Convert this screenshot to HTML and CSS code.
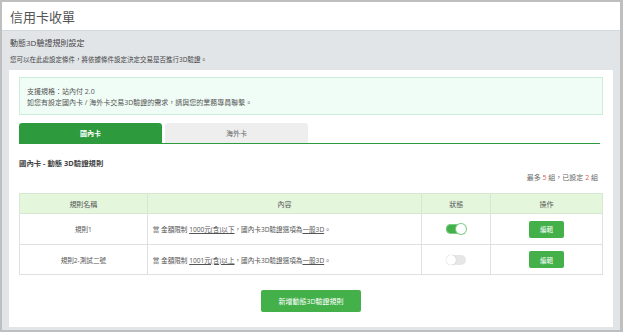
FILE: index.html
```html
<!DOCTYPE html>
<html lang="zh-Hant">
<head>
    <meta charset="UTF-8">
    <meta name="viewport" content="width=device-width, initial-scale=1.0">
    <title>信用卡收單</title>
    <link rel="stylesheet" href="styles.css">
</head>
<body>
    <div class="app">
        <div class="topbar">信用卡收單</div>

        <div class="main">
            <div class="page-title">動態3D驗證規則設定</div>
            <div class="page-desc">您可以在此處設定條件，將依據條件設定決定交易是否進行3D驗證。</div>

            <div class="card">
                <div class="notice">
                    <div>支援規格：站內付 2.0</div>
                    <div>如您有設定國內卡 / 海外卡交易3D驗證的需求，請與您的業務專員聯繫。</div>
                </div>

                <div class="tabs">
                    <div class="tab active">國內卡</div>
                    <div class="tab">海外卡</div>
                </div>

                <div class="section-title">國內卡 - 動態 3D驗證規則</div>
                <div class="counter">最多 <span class="num">5</span> 組，已設定 <span class="num">2</span> 組</div>

                <table class="rules">
                    <thead>
                        <tr>
                            <th class="col-name">規則名稱</th>
                            <th class="col-content">內容</th>
                            <th class="col-status">狀態</th>
                            <th class="col-action">操作</th>
                        </tr>
                    </thead>
                    <tbody>
                        <tr class="row-first">
                            <td>規則1</td>
                            <td class="content">當 金額限制 <u>1000元(含)以下</u>，國內卡3D驗證選項為<u>一般3D</u>。</td>
                            <td><span class="switch on"><span class="knob"></span></span></td>
                            <td><button class="edit-btn">編輯</button></td>
                        </tr>
                        <tr>
                            <td>規則2-測試二號</td>
                            <td class="content">當 金額限制 <u>1001元(含)以上</u>，國內卡3D驗證選項為<u>一般3D</u>。</td>
                            <td><span class="switch"><span class="knob"></span></span></td>
                            <td><button class="edit-btn">編輯</button></td>
                        </tr>
                    </tbody>
                </table>

                <div class="actions">
                    <button class="add-btn">新增動態3D驗證規則</button>
                </div>
            </div>
        </div>
    </div>
</body>
</html>
```

FILE: styles.css
```css
* {
    box-sizing: border-box;
}
html, body {
    height: 100%;
}
body {
    margin: 0;
    padding: 2px 3px 2px 2px;
    background-color: #bfbfbf;
    font-family: "Open Sans", "Noto Sans CJK TC", sans-serif;
    color: #555;
}
.app {
    height: 100%;
    background-color: #e2e5e8;
}
.topbar {
    height: 29px;
    padding-left: 8px;
    display: flex;
    align-items: center;
    background-color: #fff;
    border-bottom: 1px solid #d6d9dc;
    font-size: 13px;
    color: #555;
}
.main {
    padding: 0 7px;
}
.page-title {
    margin: 7px 0 0 1px;
    font-size: 8px;
    line-height: 10px;
    color: #444;
}
.page-desc {
    margin: 8px 0 0 1px;
    font-size: 6.5px;
    line-height: 8px;
    color: #444;
}
.card {
    margin-top: 6px;
    padding: 7px 10px 15px;
    background-color: #fff;
}
.notice {
    padding: 8px 7px 6px;
    border: 1px solid #cdeedd;
    background-color: #f0fdf6;
    font-size: 7px;
    line-height: 11px;
    color: #555;
}
.tabs {
    display: flex;
    gap: 3px;
    margin: 8px 3px 0 0;
    border-bottom: 1px solid #2e9a3e;
}
.tab {
    width: 143px;
    height: 20px;
    display: flex;
    align-items: center;
    justify-content: center;
    border-radius: 3px 3px 0 0;
    background-color: #eee;
    font-size: 7px;
    color: #666;
}
.tab.active {
    background-color: #2e9a3e;
    color: #fff;
    font-weight: bold;
}
.section-title {
    margin-top: 14px;
    font-size: 7.4px;
    line-height: 10px;
    font-weight: bold;
    color: #444;
}
.counter {
    margin: 5px 5px 0 0;
    text-align: right;
    font-size: 7px;
    line-height: 10px;
    color: #666;
}
.counter .num {
    color: #e2574c;
}
.rules {
    width: 100%;
    margin-top: 10px;
    border-collapse: collapse;
    font-size: 6.6px;
    color: #555;
}
.rules th, .rules td {
    border: 1px solid #e0e0e0;
    text-align: center;
    padding: 0;
}
.rules th {
    height: 20px;
    background-color: #e4f6dc;
    border-color: #d6e8d0;
    font-weight: normal;
    font-size: 7px;
}
.rules td {
    height: 30px;
}
.rules .row-first td {
    height: 31px;
}
.rules td.content {
    text-align: left;
    padding-left: 5px;
}
.col-name { width: 128px; }
.col-content { width: 275px; }
.col-status { width: 69px; }
.col-action { width: 112px; }

.switch {
    display: inline-block;
    position: relative;
    width: 20px;
    height: 10px;
    vertical-align: middle;
    border-radius: 5px;
    background-color: #e6e6e6;
}
.switch .knob {
    position: absolute;
    top: 0;
    left: 0;
    width: 10px;
    height: 10px;
    border-radius: 50%;
    background-color: #fff;
    box-shadow: 0 0 1px rgba(0,0,0,0.25);
}
.switch.on {
    background-color: #43b04a;
    box-shadow: inset 0 0 0 1px #7dcc83;
}
.switch.on .knob {
    left: 10px;
    top: 0;
    box-shadow: 0 0 0 1px #7dcc83;
}
.edit-btn {
    width: 35px;
    height: 17px;
    padding: 0;
    border: none;
    border-radius: 2px;
    background-color: #43b04a;
    color: #fff;
    font-family: inherit;
    font-size: 6.5px;
    vertical-align: middle;
}
.actions {
    margin-top: 12px;
    text-align: center;
}
.add-btn {
    width: 100px;
    height: 22px;
    padding: 0;
    border: none;
    border-radius: 2px;
    background-color: #43b04a;
    color: #fff;
    font-family: inherit;
    font-size: 7px;
}
```
